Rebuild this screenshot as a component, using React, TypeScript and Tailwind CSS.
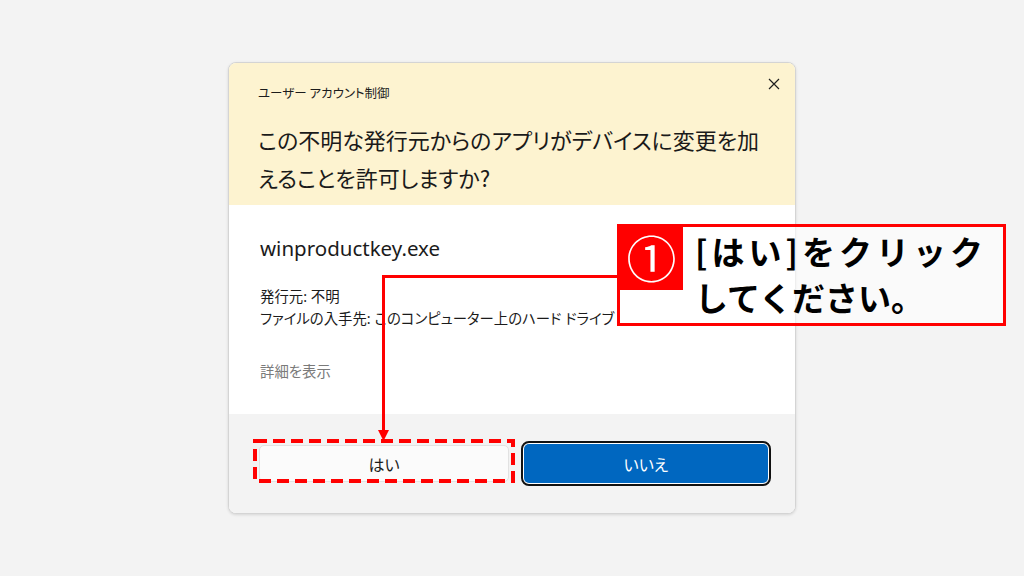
import React from "react";

export default function App() {
  return (
    <div className="relative w-[1024px] h-[576px] overflow-hidden bg-[#f3f3f3] pl-[228px] pt-[62px] font-['Noto_Sans','Noto_Sans_CJK_JP',sans-serif] [font-feature-settings:'palt']">
      {/* Dialog */}
      <div className="flex flex-col w-[568px] h-[452px] rounded-[8px] border border-[#d4d4d4] overflow-hidden shadow-[0_1px_3px_rgba(0,0,0,0.12)] bg-white">
        {/* header */}
        <div className="relative h-[142px] bg-[#fdf3d0] pl-[29px] pt-[22px]">
          <div className="text-[12.5px] leading-[16px] text-[#1c1c1c] font-['Noto_Sans_CJK_JP',sans-serif]">ユーザー アカウント制御</div>
          <div className="mt-[19px] text-[22px] leading-[38px] text-[#1a1a1a] font-['Noto_Sans_CJK_JP',sans-serif] w-[530px] whitespace-nowrap">
            この不明な発行元からのアプリがデバイスに変更を加
            <br />
            えることを許可しますか?
          </div>
          <svg className="absolute left-[539px] top-[15px]" width="12" height="12" viewBox="0 0 12 12">
            <path d="M1 1L11 11M11 1L1 11" stroke="#1f1f1f" strokeWidth="1.2" fill="none" />
          </svg>
        </div>
        {/* body */}
        <div className="h-[209px] bg-white pl-[31px] pt-[30px] text-[#1b1b1b]">
          <div className="text-[20.5px] leading-[26px]">winproductkey.exe</div>
          <div className="mt-[25px] text-[14.4px] leading-[22px]">
            <div>発行元: 不明</div>
            <div className="whitespace-nowrap">ファイルの入手先: このコンピューター上のハード ドライブ</div>
          </div>
          <div className="mt-[31px] text-[14.4px] leading-[22px] text-[#7a7a7a]">詳細を表示</div>
        </div>
        {/* footer */}
        <div className="flex-1 bg-[#f3f3f3] pl-[30px] pt-[31px] flex gap-[12px]">
          <div className="w-[250px] h-[37px] rounded-[5px] border border-[#e2e2e2] bg-[#fbfbfb] flex items-center justify-center text-[16px] text-[#1b1b1b] font-['Noto_Sans_CJK_JP',sans-serif]">
            はい
          </div>
          <div className="w-[250px] h-[45px] -mt-[4px] rounded-[8px] border-2 border-[#111] p-[1px] bg-white">
            <div className="w-full h-full rounded-[5px] bg-[#0067c0] flex items-center justify-center text-[16px] text-white font-['Noto_Sans_CJK_JP',sans-serif]">
              いいえ
            </div>
          </div>
        </div>
      </div>

      {/* annotation lines */}
      <svg className="absolute left-0 top-0 pointer-events-none" width="1024" height="576" viewBox="0 0 1024 576">
        <path d="M618 276.5 H383.5 V432" stroke="#ff0000" strokeWidth="3" fill="none" />
        <polygon points="378,430 389,430 383.5,441" fill="#ff0000" />
        <rect x="255" y="441" width="258" height="40" fill="none" stroke="#ff0000" strokeWidth="4" strokeDasharray="12 6" />
      </svg>

      {/* callout */}
      <div className="absolute left-[617px] top-[224px] w-[389px] h-[102px] border-[3px] border-[#ff0000] bg-white/60 flex font-['Noto_Sans_CJK_JP',sans-serif] [font-feature-settings:normal]">
        <div className="w-[63px] h-[63px] shrink-0 bg-[#ff0000] flex items-center justify-center text-white text-[50px] leading-[50px] pb-[6px]">
          ①
        </div>
        <div className="pl-[12px] pt-[1px] text-[33px] leading-[46px] font-bold text-black whitespace-nowrap">
          <div className="tracking-[4px]">[はい]をクリック</div>
          <div>してください。</div>
        </div>
      </div>
    </div>
  );
}
